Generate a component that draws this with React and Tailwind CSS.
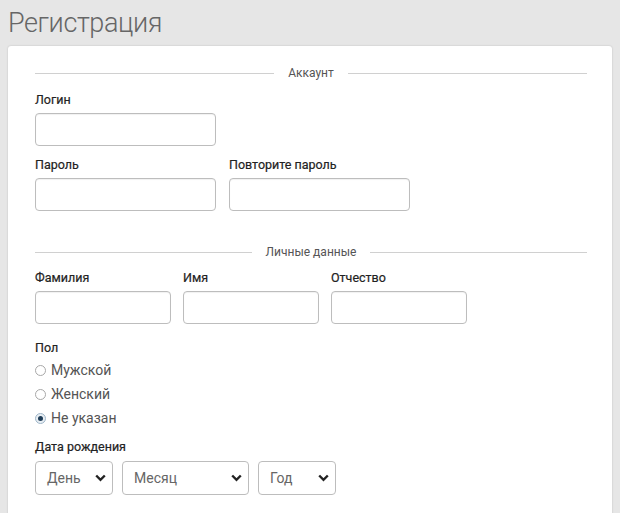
import React from "react";

const font = { fontFamily: "Roboto, 'Liberation Sans', sans-serif" };

function Divider({ title }) {
  return (
    <div className="flex items-center h-[14px]">
      <div className="flex-1 h-px bg-[#d0d0d0]" />
      <span className="px-[14px] text-[12px] leading-[14px] text-[#555]">{title}</span>
      <div className="flex-1 h-px bg-[#d0d0d0]" />
    </div>
  );
}

function Label({ children }) {
  return <div className="h-[16px] leading-[16px] text-[12.5px] text-[#222] [-webkit-text-stroke:0.2px_#222]">{children}</div>;
}

function Field({ label, w }) {
  return (
    <div className="flex flex-col">
      <Label>{label}</Label>
      <div className={`${w} mt-[5px] h-[33px] border border-[#bdbdbd] rounded-[4px] bg-white shadow-[inset_0_1px_1px_rgba(0,0,0,0.06)]`} />
    </div>
  );
}

function Radio({ label, checked }) {
  return (
    <div className="flex items-center h-[24px]">
      <div
        className={`w-[11px] h-[11px] rounded-full border flex items-center justify-center ${
          checked ? "border-[#9fb6c9] bg-[#e8eef3]" : "border-[#a8a8a8] bg-white"
        }`}
      >
        {checked && <div className="w-[5px] h-[5px] rounded-full bg-[#1f3d57]" />}
      </div>
      <span className="ml-[5px] text-[14px] text-[#555]">{label}</span>
    </div>
  );
}

function Select({ label, w }) {
  return (
    <div
      className={`${w} h-[34px] border border-[#bdbdbd] rounded-[4px] bg-white flex items-center pl-[11px] pr-[6px]`}
    >
      <span className="flex-1 text-[14px] text-[#666]">{label}</span>
      <svg width="11" height="8" viewBox="0 0 11 8" className="shrink-0">
        <polyline points="1.2,1.5 5.5,5.8 9.8,1.5" fill="none" stroke="#222" strokeWidth="2.4" />
      </svg>
    </div>
  );
}

export default function App() {
  return (
    <div className="min-h-[513px] bg-[#e6e6e6] overflow-hidden" style={font}>
      <div className="pl-[8px] pt-[9px] h-[46px]">
        <h1 className="text-[27px] leading-[28px] font-light tracking-[-0.4px] text-[#666]">Регистрация</h1>
      </div>
      <div className="ml-[8px] w-[604px] bg-white rounded-[3px] shadow-[0_0_2px_rgba(0,0,0,0.2)] pl-[27px] pr-[25px] pt-[20px] pb-[60px]">
        <Divider title="Аккаунт" />
        <div className="mt-[12px]">
          <Field label="Логин" w="w-[181px]" />
        </div>
        <div className="mt-[11px] flex gap-[13px]">
          <Field label="Пароль" w="w-[181px]" />
          <Field label="Повторите пароль" w="w-[181px]" />
        </div>
        <div className="mt-[34px]">
          <Divider title="Личные данные" />
        </div>
        <div className="mt-[11px] flex gap-[12px]">
          <Field label="Фамилия" w="w-[136px]" />
          <Field label="Имя" w="w-[136px]" />
          <Field label="Отчество" w="w-[136px]" />
        </div>
        <div className="mt-[16px]">
          <Label>Пол</Label>
        </div>
        <div className="mt-[2px] flex flex-col">
          <Radio label="Мужской" />
          <Radio label="Женский" />
          <Radio label="Не указан" checked />
        </div>
        <div className="mt-[9px]">
          <Label>Дата рождения</Label>
        </div>
        <div className="mt-[6px] flex">
          <Select label="День" w="w-[78px]" />
          <div className="w-[9px]" />
          <Select label="Месяц" w="w-[127px]" />
          <div className="w-[9px]" />
          <Select label="Год" w="w-[78px]" />
        </div>
      </div>
    </div>
  );
}
